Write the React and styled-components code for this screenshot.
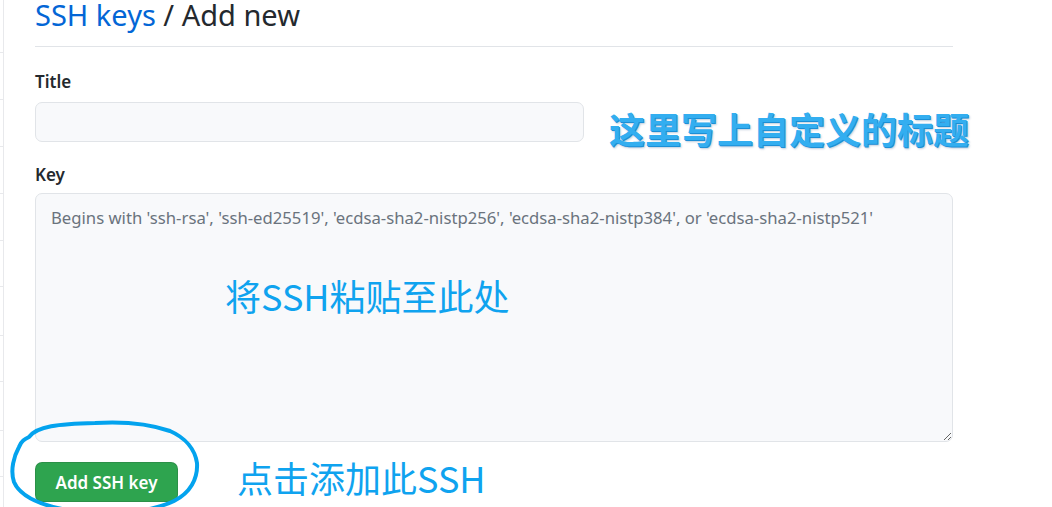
import React from "react";
import styled, { createGlobalStyle } from "styled-components";

const GlobalStyle = createGlobalStyle`
    html, body {
        margin: 0;
        padding: 0;
        background: #ffffff;
        overflow: hidden;
    }
    body {
        font-family: "Noto Sans", "Noto Sans CJK SC", sans-serif;
        color: #24292e;
    }
`

const sideRows = [53, 47, 47, 47, 47, 46, 49, 46, 49, 46];

export default function App() {
    return (
        <>
            <GlobalStyle />
            <Page>
                <Sidebar>
                    {sideRows.map((h, index) => (
                        <SideRow key={index} style={{ height: h }} />
                    ))}
                </Sidebar>
                <Main>
                    <Heading>
                        <HeadLink>SSH keys</HeadLink> / Add new
                    </Heading>
                    <Label $top={25}>Title</Label>
                    <FieldRow>
                        <TitleInput type="text" />
                        <Note $bold $shift={6}>这里写上自定义的标题</Note>
                    </FieldRow>
                    <Label $top={17}>Key</Label>
                    <KeyBox>
                        <KeyArea placeholder="Begins with 'ssh-rsa', 'ssh-ed25519', 'ecdsa-sha2-nistp256', 'ecdsa-sha2-nistp384', or 'ecdsa-sha2-nistp521'" />
                        <PasteNote>将SSH粘贴至此处</PasteNote>
                    </KeyBox>
                    <ButtonRow>
                        <AddButton>Add SSH key</AddButton>
                        <Note $shift={-5}>点击添加此SSH</Note>
                    </ButtonRow>
                </Main>
                <Circle width="210" height="100" viewBox="0 410 210 100">
                    <path
                        d="M 62 509 C 38 504, 20 496, 14 482 C 10 470, 14 456, 19 447 C 21 441, 25 439, 29 437 C 37 426, 58 424, 95 423 C 128 421, 150 424, 170 431 C 186 438, 195 450, 197 463 C 198 479, 190 493, 174 501 C 164 506, 152 508, 146 510"
                        fill="none"
                        stroke="#03a3ee"
                        strokeWidth="4"
                        strokeLinecap="round"
                        strokeLinejoin="round"
                    />
                </Circle>
            </Page>
        </>
    )
}

const Page = styled.div`
    position: relative;
    display: flex;
    width: 1052px;
    height: 507px;
    overflow: hidden;
`
const Sidebar = styled.div`
    width: 3px;
    flex-shrink: 0;
    border-right: 1px solid #e8e9ec;
    display: flex;
    flex-direction: column;
`
const SideRow = styled.div`
    flex-shrink: 0;
    box-sizing: border-box;
    border-bottom: 1px solid #e8e9ec;
`
const Main = styled.div`
    display: flex;
    flex-direction: column;
    padding-left: 31px;
    width: 918px;
`
const Heading = styled.h2`
    margin: 0;
    font-size: 29px;
    font-weight: 400;
    line-height: 30px;
    padding-bottom: 16px;
    border-bottom: 1px solid #e1e4e8;
    color: #24292e;
    white-space: nowrap;
`
const HeadLink = styled.span`
    color: #0366d6;
`
const Label = styled.div`
    margin-top: ${(p) => p.$top}px;
    font-size: 17px;
    font-weight: 600;
    line-height: 20px;
    color: #24292e;
`
const FieldRow = styled.div`
    display: flex;
    align-items: flex-start;
    gap: 25px;
    margin-top: 10px;
    width: 1000px;
`
const TitleInput = styled.input`
    box-sizing: border-box;
    width: 549px;
    height: 40px;
    background: #f8f9fb;
    border: 1px solid #e1e4e8;
    border-radius: 7px;
    outline: none;
    font: inherit;
`
const Note = styled.div`
    font-family: "Noto Sans CJK SC", "Noto Sans", sans-serif;
    font-size: 36px;
    line-height: 40px;
    white-space: nowrap;
    color: #0fa3ef;
    font-weight: ${(p) => (p.$bold ? 700 : 400)};
    margin-top: ${(p) => p.$shift ?? 0}px;
    ${(p) =>
        p.$bold &&
        `
        color: #33aef0;
        text-shadow: 1px 1px 0 #1c8fd6, 2px 2px 2px rgba(0, 60, 120, 0.25);
    `}
`
const KeyBox = styled.div`
    position: relative;
    margin-top: 8px;
`
const KeyArea = styled.textarea`
    display: block;
    box-sizing: border-box;
    width: 918px;
    height: 249px;
    padding: 13px 15px;
    background: #f8f9fb;
    border: 1px solid #e1e4e8;
    border-radius: 7px;
    outline: none;
    font-family: "Noto Sans", sans-serif;
    font-size: 16.7px;
    line-height: 22px;
    color: #24292e;
    &::placeholder {
        color: #6a737d;
    }
`
const PasteNote = styled.div`
    position: absolute;
    left: 190px;
    top: 80px;
    font-family: "Noto Sans CJK SC", "Noto Sans", sans-serif;
    font-size: 36px;
    line-height: 44px;
    color: #0fa3ef;
    white-space: nowrap;
    pointer-events: none;
`
const ButtonRow = styled.div`
    display: flex;
    align-items: flex-start;
    gap: 59px;
    margin-top: 20px;
`
const AddButton = styled.button`
    box-sizing: border-box;
    width: 143px;
    height: 40px;
    background: #2ea44f;
    border: 1px solid rgba(27, 31, 35, 0.15);
    border-radius: 7px;
    color: #ffffff;
    font-family: "Noto Sans", sans-serif;
    font-size: 17px;
    font-weight: 600;
`
const Circle = styled.svg`
    position: absolute;
    left: 0;
    top: 410px;
    pointer-events: none;
`
